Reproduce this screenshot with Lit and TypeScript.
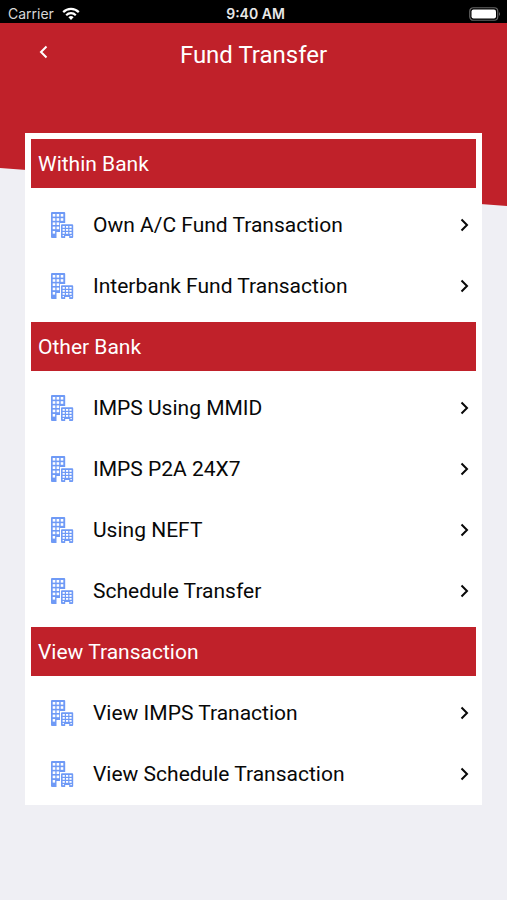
import { LitElement, html, css, svg } from "lit";
import { customElement } from "lit/decorators.js";

interface Section {
  title: string;
  items: string[];
}

const sections: Section[] = [
  { title: "Within Bank", items: ["Own A/C Fund Transaction", "Interbank Fund Transaction"] },
  { title: "Other Bank", items: ["IMPS Using MMID", "IMPS P2A 24X7", "Using NEFT", "Schedule Transfer"] },
  { title: "View Transaction", items: ["View IMPS Tranaction", "View Schedule Transaction"] },
];

// One window pane of the building icon.
const pane = (x: number, y: number, w: number, h: number) =>
  svg`<rect x=${x} y=${y} width=${w} height=${h} fill="#fff"></rect>`;

const buildingIcon = html`<svg class="building" viewBox="0 0 24 28" aria-hidden="true">
  <path fill="#6f9af6" d="M2 1h12.2a1 1 0 0 1 1 1v10H10v9H6.5v6H2a1 1 0 0 1-1-1V2a1 1 0 0 1 1-1z"></path>
  <path fill="#6f9af6" d="M12 13.2h10.2a1 1 0 0 1 1 1V26a1 1 0 0 1-1 1h-3v-2h-4v2H12a1 1 0 0 1-1-1V14.2a1 1 0 0 1 1-1z"></path>
  ${[3, 7.2, 11.4, 15.6].map((y) =>
    [2.7, 6.6, 10.7].map((x) => (x > 10 && y > 8 ? null : pane(x, y, 2.6, 2.6)))
  )}
  ${pane(2.7, 20, 2.4, 2.6)}
  ${[15, 18, 21].map((y) => [12.6, 16, 19.4].map((x) => pane(x, y, 2.2, 1.8)))}
  ${pane(12.6, 24, 1.4, 1.2)}${pane(20.4, 24, 1.4, 1.2)}
</svg>`;

@customElement("app-root")
export class AppRoot extends LitElement {
  static styles = css`
    :host {
      display: block;
      min-height: 100vh;
      background: #efeff4;
      font-family: Roboto, "Liberation Sans", sans-serif;
      color: #080808;
    }
    .status {
      display: grid;
      grid-template-columns: 1fr auto 1fr;
      align-items: center;
      height: 23px;
      padding: 4px 6px 0 8px;
      box-sizing: border-box;
      background: #000;
      color: #fff;
      font-family: Inter, "Liberation Sans", sans-serif;
      font-size: 14px;
      line-height: 18px;
    }
    .carrier {
      display: flex;
      align-items: center;
      gap: 8px;
      color: #d8d8d8;
    }
    .wifi {
      width: 18px;
      height: 13px;
    }
    .time {
      padding-left: 2px;
      font-weight: 600;
      color: #e8e8e8;
    }
    .battery {
      justify-self: end;
      width: 32px;
      height: 14px;
    }
    .hero {
      height: 183px;
      background: #c0212a;
      clip-path: polygon(0 0, 100% 0, 100% 183px, 0 145px);
    }
    .bar {
      display: grid;
      grid-template-columns: 48px 1fr 48px;
      align-items: start;
      padding: 15px 19px 0;
    }
    .back {
      display: flex;
      justify-content: center;
      padding: 7px 0 12px;
      border: 0;
      background: none;
      color: #fff;
      cursor: pointer;
    }
    .chevron {
      width: 9px;
      height: 14px;
      fill: none;
      stroke: currentColor;
      stroke-width: 2;
    }
    h1 {
      margin: 0;
      text-align: center;
      font-size: 24px;
      line-height: 34px;
      font-weight: 400;
      color: #fff;
    }
    .card {
      margin: -73px 25px 0;
      padding-bottom: 1px;
      background: #fff;
      position: relative;
    }
    h2 {
      margin: 0;
      border: 6px solid #fff;
      padding: 2px 7px 0;
      background: #c0212a;
      background-clip: padding-box;
      color: #fff;
      font-size: 21px;
      line-height: 47px;
      font-weight: 400;
    }
    ul {
      margin: 0;
      padding: 0;
      list-style: none;
    }
    .row {
      display: flex;
      align-items: center;
      height: 61px;
      padding: 0 13px 0 25px;
      color: inherit;
      text-decoration: none;
      font-size: 21px;
      line-height: 26px;
    }
    .building {
      width: 24px;
      height: 28px;
      margin-right: 19px;
    }
    .label {
      flex: 1;
    }
  `;

  render() {
    return html`
      <div class="status">
        <span class="carrier">
          Carrier
          <svg class="wifi" viewBox="0 0 18 13" aria-label="Wi-Fi">
            <g fill="none" stroke="#fff" stroke-width="2.2">
              <path d="M1.2 5.1a11 11 0 0 1 15.6 0"></path>
              <path d="M4.2 8.2a6.8 6.8 0 0 1 9.6 0"></path>
            </g>
            <path fill="#fff" d="M9 13 6.4 10.3a3.7 3.7 0 0 1 5.2 0z"></path>
          </svg>
        </span>
        <span class="time">9:40 AM</span>
        <svg class="battery" viewBox="0 0 32 14" aria-label="Battery full">
          <rect x="0.75" y="0.75" width="28" height="12.5" rx="3.5" fill="none" stroke="#666" stroke-width="1.2"></rect>
          <rect x="2.5" y="2.5" width="24.5" height="9" rx="2" fill="#fff"></rect>
          <path fill="#666" d="M30 5q2 2 0 4z"></path>
        </svg>
      </div>
      <header class="hero">
        <div class="bar">
          <button class="back" aria-label="Back">
            <svg class="chevron" viewBox="0 0 9 14"><path d="M7.5 1.5 2 7l5.5 5.5"></path></svg>
          </button>
          <h1>Fund Transfer</h1>
        </div>
      </header>
      <main class="card">
        ${sections.map(
          (s) => html`<section>
            <h2>${s.title}</h2>
            <ul>
              ${s.items.map(
                (item) => html`<li>
                  <a class="row" href="#">
                    ${buildingIcon}
                    <span class="label">${item}</span>
                    <svg class="chevron" viewBox="0 0 9 14" aria-hidden="true"><path d="M1.5 1.5 7 7l-5.5 5.5"></path></svg>
                  </a>
                </li>`
              )}
            </ul>
          </section>`
        )}
      </main>
    `;
  }
}
